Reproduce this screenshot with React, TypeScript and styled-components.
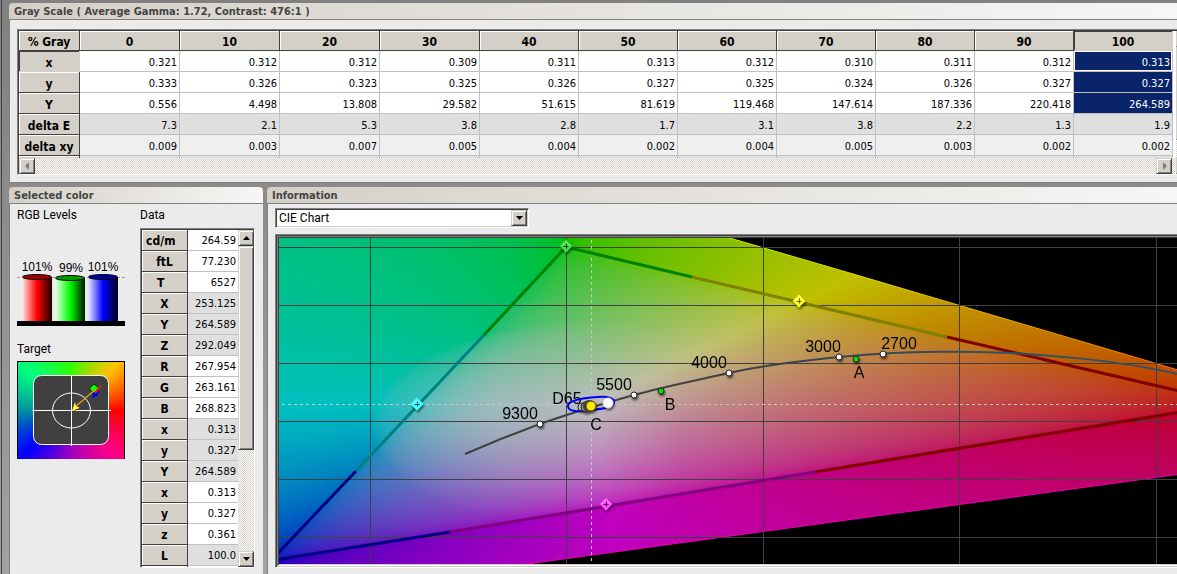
import React, { useEffect, useRef } from 'react';
import styled, { createGlobalStyle, css } from 'styled-components';

const GlobalStyle = createGlobalStyle`
  * { box-sizing: border-box; }
  body {
    margin: 0;
    overflow: hidden;
    background: #8c8c8c;
    color: #000;
    font: 11px/14px "DejaVu Sans Condensed", "DejaVu Sans", sans-serif;
  }
`;

const Desktop = styled.main`
  display: flex;
  flex-direction: column;
  gap: 4px;
  width: calc(100% + 24px);
  min-height: 100vh;
  padding: 3px 0 0 9px;
  background:
    linear-gradient(90deg, transparent 1px, #404040 1px, #404040 2px, transparent 2px),
    linear-gradient(#808080, #a2a2a2);
`;

const Columns = styled.div`
  display: flex;
  flex: 1;
  gap: 4px;
`;

const Panel = styled.section<{ $width?: number }>`
  display: flex;
  flex-direction: column;
  min-width: 0;
  flex: ${(p) => (p.$width ? `0 0 ${p.$width}px` : '1 0 auto')};
`;

const TopPanel = styled(Panel)`
  flex: none;
`;

const WidePanel = styled(Panel)`
  flex: 1 1 0;
`;

const PanelTitle = styled.h2`
  margin: 0;
  height: 17px;
  padding: 1px 5px;
  border-bottom: 1px solid #808080;
  border-radius: 4px 4px 0 0;
  background: linear-gradient(90deg, #d4d0c8, #f8f7f6);
  color: #444;
  font: bold 11px/15px "DejaVu Sans Condensed", "DejaVu Sans", sans-serif;
  white-space: nowrap;
`;

const PanelBody = styled.div<{ $top: number }>`
  flex: 1;
  padding: ${(p) => p.$top}px 8px 7px 7px;
  border: solid #808080;
  border-width: 0 0 1px 1px;
  background: #ebebeb;
`;

const Sunken = styled.div`
  display: flex;
  border: 1px solid;
  border-color: #808080 #fff #fff #808080;
  box-shadow: inset 1px 1px #404040;
  padding: 1px 0 0 1px;
`;

const GridMain = styled.div`
  flex: 1;
  min-width: 0;
`;

const Clip = styled.div<{ $height: number }>`
  height: ${(p) => p.$height}px;
  overflow: hidden;
  background: #fff;
`;

const Table = styled.table<{ $inset: number }>`
  border-collapse: separate;
  border-spacing: 0;
  table-layout: fixed;
  width: 0;
  th, td { padding-top: ${(p) => p.$inset}px; }
`;

const Col = styled.col<{ $w: number }>`
  width: ${(p) => p.$w}px;
`;

const HeadCell = styled.th<{ $pressed?: boolean; $top?: boolean }>`
  height: ${(p) => (p.$top ? 20 : 21)}px;
  padding: 0;
  overflow: hidden;
  border: solid #404040;
  border-width: 0 1px 1px 0;
  background: #d4d0c8;
  box-shadow: inset 1px 1px #fff;
  font-size: 12px;
  font-weight: bold;
  text-align: center;
  white-space: pre;
  ${(p) =>
    p.$pressed &&
    css`
      border-color: #d4d0c8;
      box-shadow: inset 1px 1px #404040;
    `}
`;

const Cell = styled.td<{ $bg?: string; $on?: boolean }>`
  height: 21px;
  padding: 0 2px 0 0;
  border: solid #c0c0c0;
  border-width: 0 1px 1px 0;
  background: ${(p) => (p.$on ? '#0a246a' : p.$bg || '#fff')};
  color: ${(p) => (p.$on ? '#fff' : '#000')};
  text-align: right;
`;

const FocusCell = styled(Cell)`
  box-shadow: inset 1px 1px #fff, inset -1px -1px #fff;
`;

const track = 'repeating-conic-gradient(#fff 0 25%, #d4d0c8 0 50%) 0 0 / 2px 2px';

const ScrollRow = styled.div`
  display: flex;
  justify-content: space-between;
  height: 16px;
  padding-right: 4px;
  background: ${track};
`;

const ScrollColumn = styled.div`
  display: flex;
  flex: 0 0 16px;
  flex-direction: column;
  background: ${track};
`;

const raised = css`
  border: 1px solid;
  border-color: #d4d0c8 #404040 #404040 #d4d0c8;
  background: #d4d0c8;
  box-shadow: inset 1px 1px #fff, inset -1px -1px #808080;
`;

const ScrollButton = styled.button`
  ${raised}
  display: flex;
  align-items: center;
  justify-content: center;
  width: 16px;
  height: 16px;
  padding: 0;
`;

const Thumb = styled.div<{ $height: number }>`
  ${raised}
  height: ${(p) => p.$height}px;
  margin-bottom: auto;
`;

const Selected = styled.div`
  display: grid;
  grid-template-columns: 108px 115px;
  column-gap: 15px;
  align-items: start;
`;

const Stack = styled.div`
  display: flex;
  flex-direction: column;
`;

const Label = styled.h3<{ $gap: number }>`
  margin: 0 0 ${(p) => p.$gap}px;
  font: 12px/14px Roboto, sans-serif;
`;

const Bars = styled.svg`
  display: block;
  margin-bottom: 16px;
  font: 12px "Liberation Sans", sans-serif;
`;

const TargetBox = styled.div`
  height: 98px;
  border: solid #000;
  border-width: 1px 1px 0 1px;
  background: conic-gradient(
    from 0deg,
    #30ff00 0deg, #ffc000 45deg, #ff0000 90deg, #ff0088 135deg,
    #a000c0 180deg, #0000ff 228deg, #0090a0 270deg, #00ff80 312deg, #30ff00 360deg
  );
`;

const Drawing = styled.svg`
  display: block;
`;

const SelectBox = styled.label`
  display: flex;
  width: 254px;
  height: 20px;
  margin-bottom: 6px;
  border: 1px solid;
  border-color: #808080 #fff #fff #808080;
  box-shadow: inset 1px 1px #404040, inset -1px -1px #d4d0c8;
  background: #fff;
  padding: 1px;
`;

const Select = styled.select`
  appearance: none;
  flex: 1;
  border: 0;
  outline: 0;
  padding: 0 2px;
  background: transparent;
  color: #000;
  font: 12px/16px Roboto, sans-serif;
`;

const DropArrow = styled.span`
  ${raised}
  display: flex;
  align-items: center;
  justify-content: center;
  width: 16px;
`;

const ChartFrame = styled.div`
  display: grid;
  overflow: hidden;
  padding: 3px;
  border: 1px solid;
  border-color: #808080 #fff #fff #808080;
  box-shadow:
    inset 1px 1px #404040, inset -1px -1px #d4d0c8,
    inset 2px 2px #808080, inset -2px -2px #fff,
    inset 3px 3px #404040, inset -3px -3px #d4d0c8;
  background: #000;
`;

const ChartView = styled.div`
  display: grid;
  min-width: 0;
  overflow: hidden;
  > * { grid-area: 1 / 1; display: block; }
`;

const ChartText = styled.g`
  font: 16px "Liberation Sans", Arial, sans-serif;
  fill: #000;
`;

type Dir = 'up' | 'down' | 'left' | 'right';
const arrows: Record<Dir, string> = {
  up: 'M0 6H7L3.5 2Z',
  down: 'M0 2H7L3.5 6Z',
  left: 'M5 0V8L1 4Z',
  right: 'M2 0V8L6 4Z',
};

const Arrow = ({ dir, color = '#000' }: { dir: Dir; color?: string }) => (
  <svg width="7" height="8" aria-hidden="true">
    <path d={arrows[dir]} fill={color} />
  </svg>
);

const levels = [0, 10, 20, 30, 40, 50, 60, 70, 80, 90, 100];
const grayRows: { name: string; bg?: string; values: string[] }[] = [
  { name: 'x', values: ['0.321', '0.312', '0.312', '0.309', '0.311', '0.313', '0.312', '0.310', '0.311', '0.312', '0.313'] },
  { name: 'y', values: ['0.333', '0.326', '0.323', '0.325', '0.326', '0.327', '0.325', '0.324', '0.326', '0.327', '0.327'] },
  { name: 'Y', values: ['0.556', '4.498', '13.808', '29.582', '51.615', '81.619', '119.468', '147.614', '187.336', '220.418', '264.589'] },
  { name: 'delta E', bg: '#dfdfdf', values: ['7.3', '2.1', '5.3', '3.8', '2.8', '1.7', '3.1', '3.8', '2.2', '1.3', '1.9'] },
  { name: 'delta xy', bg: '#efefef', values: ['0.009', '0.003', '0.007', '0.005', '0.004', '0.002', '0.004', '0.005', '0.003', '0.002', '0.002'] },
];

const GrayTable = () => (
  <Table $inset={3}>
    <colgroup>
      <Col $w={61} />
      {levels.map((l) => <Col key={l} $w={l < 40 ? 100 : 99} />)}
    </colgroup>
    <thead>
      <tr>
        <HeadCell $top scope="col">% Gray</HeadCell>
        {levels.map((l) => (
          <HeadCell key={l} $top $pressed={l === 100} scope="col">{l}</HeadCell>
        ))}
      </tr>
    </thead>
    <tbody>
      {grayRows.map((row, r) => (
        <tr key={row.name}>
          <HeadCell $pressed={r === 0} scope="row">{row.name}</HeadCell>
          {row.values.map((v, c) => {
            const on = c === 10 && r < 3;
            const Part = on && r === 0 ? FocusCell : Cell;
            return <Part key={c} $bg={row.bg} $on={on}>{v}</Part>;
          })}
        </tr>
      ))}
      <tr>
        <HeadCell />
        {levels.map((l) => <Cell key={l} $bg="#dfdfdf" />)}
      </tr>
    </tbody>
  </Table>
);

const data: [string, string, boolean?][] = [
  ['cd/m  ', '264.59'], ['ftL', '77.230'], ['T  ', '6527'],
  ['X', '253.125', true], ['Y', '264.589', true], ['Z', '292.049', true],
  ['R', '267.954'], ['G', '263.161'], ['B', '268.823'],
  ['x', '0.313', true], ['y', '0.327', true], ['Y', '264.589', true],
  ['x', '0.313'], ['y', '0.327'], ['z', '0.361'], ['L', '100.0', true],
];

const DataTable = () => (
  <Table $inset={2}>
    <colgroup>
      <Col $w={46} />
      <Col $w={51} />
    </colgroup>
    <tbody>
      {data.map(([name, value, shaded], i) => (
        <tr key={i}>
          <HeadCell scope="row">{name}</HeadCell>
          <Cell $bg={shaded ? '#dfdfdf' : undefined}>{value}</Cell>
        </tr>
      ))}
      <tr>
        <HeadCell />
        <Cell />
      </tr>
    </tbody>
  </Table>
);

const cylinders = [
  { id: 'r', x: 5, top: 39, cap: '#a00000', mid: '#ff0000', light: '#ffeaea', end: '#180000', text: '101%', tx: 20 },
  { id: 'g', x: 38, top: 40, cap: '#00a000', mid: '#00ff00', light: '#eaffea', end: '#001800', text: '99%', tx: 54 },
  { id: 'b', x: 71, top: 39, cap: '#0000a0', mid: '#0000ff', light: '#eaeaff', end: '#000018', text: '101%', tx: 86 },
];

const RgbBars = () => (
  <Bars width="108" height="88" role="img" aria-label="RGB levels">
    <defs>
      {cylinders.map((c) => (
        <linearGradient id={`cyl-${c.id}`} key={c.id}>
          <stop offset="0" stopColor={c.light} />
          <stop offset="0.5" stopColor={c.mid} />
          <stop offset="1" stopColor={c.end} />
        </linearGradient>
      ))}
    </defs>
    <path d="M0 39.5H108" stroke="#999" strokeDasharray="3 2" />
    {cylinders.map((c) => (
      <g key={c.id}>
        <rect x={c.x} y={c.top} width="30" height="45" fill={`url(#cyl-${c.id})`} />
        <ellipse cx={c.x + 15} cy={c.top} rx="14.5" ry="2.5" fill={c.cap} stroke="#000" />
        <text x={c.tx} y={c.top - 6} textAnchor="middle">{c.text}</text>
      </g>
    ))}
    <rect y="83" width="108" height="5" />
  </Bars>
);

const Target = () => (
  <TargetBox>
    <Drawing width="106" height="97" role="img" aria-label="Target">
      <rect x="15.5" y="13.5" width="75" height="69" rx="8" fill="#404040" stroke="#fff" />
      <path d="M53.5 14V84M14 48.5H93" stroke="#fff" />
      <ellipse cx="53.5" cy="48.5" rx="19" ry="17.5" fill="none" stroke="#fff" />
      <path d="M74 34L76 26L82 29L79 34L75 36Z" fill="#0000ff" />
      <path d="M71 27L76 22L81 26L76 31Z" fill="#00ff00" stroke="#003000" />
      <path d="M77 31L83 24" stroke="#e02000" strokeWidth="2" />
      <path d="M57 45L78 27" stroke="#e0a020" strokeWidth="1.5" />
      <path d="M54 49L57 40L58 44L62 46Z" fill="#ffff40" />
      <path d="M54 49L62 46L60 48Z" fill="#a01000" />
    </Drawing>
  </TargetBox>
);

const CHART_W = 1180;
const CHART_H = 326;
const ORIGIN_X = 279;
const ORIGIN_Y = 238;
const toX = (x: number) => 566 + (x - 0.3) * 1963;
const toY = (y: number) => 421 - (y - 0.3) * 582;
const clamp = (v: number) => Math.max(0, Math.min(1, v));

const locus: [number, number][] = [
  [0.1, 0.9], [0.3016, 0.6923], [0.3731, 0.6245], [0.4441, 0.5547], [0.5125, 0.4866],
  [0.5752, 0.4242], [0.627, 0.3725], [0.6915, 0.3083], [0.7347, 0.2653], [0.1741, 0.005], [0.1, 0.005],
];

const Chromaticity = () => {
  const ref = useRef<HTMLCanvasElement>(null);
  useEffect(() => {
    const ctx = ref.current?.getContext('2d');
    if (!ctx) return;
    const image = ctx.createImageData(CHART_W, CHART_H);
    for (let j = 0; j < CHART_H; j++) {
      const py = j + ORIGIN_Y;
      const y = 0.3 + (421 - py) / 582;
      for (let i = 0; i < CHART_W; i++) {
        const px = i + ORIGIN_X;
        const x = 0.3 + (px - 566) / 1963;
        const X = x / y;
        const Z = (1 - x - y) / y;
        const rgb = [
          3.2406 * X - 1.5372 - 0.4986 * Z,
          -0.9689 * X + 1.8758 + 0.0415 * Z,
          0.0557 * X - 0.204 + 1.057 * Z,
        ];
        const low = Math.min(0, ...rgb);
        const high = Math.max(...rgb) - low;
        // The neutral zone reaches past the white point towards cyan.
        const reach = Math.hypot((px - 591) / 218, (py - 425) / 102);
        const lift =
          0.75 * Math.sqrt(clamp(1 - reach)) * clamp((680 - px) / 180) * clamp((530 - py) / 110);
        const p = (j * CHART_W + i) * 4;
        for (let k = 0; k < 3; k++) {
          const level = Math.pow((rgb[k] - low) / high, 1 / 2.2);
          image.data[p + k] = 192 * (level + (0.96 - level) * lift);
        }
        image.data[p + 3] = 255;
      }
    }
    ctx.putImageData(image, 0, 0);
    ctx.globalCompositeOperation = 'destination-in';
    ctx.beginPath();
    locus.forEach(([x, y]) => ctx.lineTo(toX(x) - ORIGIN_X, toY(y) - ORIGIN_Y));
    ctx.closePath();
    ctx.fill();
  }, []);
  return <canvas ref={ref} width={CHART_W} height={CHART_H} />;
};

const gamut = [
  ['M484 335L566 247L692 277', '#008000'],
  ['M692 277L947 337', '#808000'],
  ['M947 337L1233 403.5L815 472', '#800000'],
  ['M815 472L450 532', '#800080'],
  ['M450 532L271 560.5L356 471', '#000080'],
  ['M356 471L484 335', '#008080'],
];

const primaries: [number, number, string, string][] = [
  [566, 246, '#40e040', '#004000'],
  [799, 301, '#ffff20', '#606000'],
  [417, 404, '#40ffff', '#006060'],
  [606, 504, '#ff50ff', '#600060'],
];

const temps: [number, number, string, number, number][] = [
  [540, 424, '9300', 520, 419],
  [634, 395, '5500', 614, 390],
  [729, 373, '4000', 709, 368],
  [839, 357, '3000', 823, 352],
  [883, 354, '2700', 899, 349],
];

const Overlay = () => (
  <svg
    width={CHART_W}
    height={CHART_H}
    viewBox={`${ORIGIN_X} ${ORIGIN_Y} ${CHART_W} ${CHART_H}`}
    role="img"
    aria-label="CIE chromaticity chart"
  >
    <defs>
      <linearGradient id="edge" gradientUnits="userSpaceOnUse" x1="730" y1="0" x2="1177" y2="0">
        <stop offset="0" stopColor="#c0f000" />
        <stop offset="0.3" stopColor="#e8e000" />
        <stop offset="1" stopColor="#ff7000" />
      </linearGradient>
      <linearGradient id="planck" gradientUnits="userSpaceOnUse" x1="720" y1="0" x2="1000" y2="0">
        <stop offset="0" stopColor="#404040" />
        <stop offset="1" stopColor="#305068" />
      </linearGradient>
      <filter id="shade" x="-50%" y="-50%" width="220%" height="220%">
        <feDropShadow dx="1" dy="2" stdDeviation="1" floodOpacity="0.6" />
      </filter>
    </defs>
    <path
      d={`M${locus.slice(1, 9).map(([x, y]) => `${toX(x)} ${toY(y)}`).join('L')}`}
      fill="none"
      stroke="url(#edge)"
    />
    <path d={`M${toX(0.1741)} ${toY(0.005)}L${toX(0.7347)} ${toY(0.2653)}`} stroke="#e800b0" />
    <path
      d="M370.5 238V564M566.5 238V564M763.5 238V564M959.5 238V564M1156.5 238V564M1352.5 238V564M279 247.5H1459M279 305.5H1459M279 363.5H1459M279 421.5H1459M279 479.5H1459M279 537.5H1459"
      stroke="#404040"
    />
    <path d="M282 404.5H1459M591.5 240V564" stroke="#c8c8c8" strokeDasharray="3 3" />
    {gamut.map(([d, color]) => (
      <path key={d} d={d} fill="none" stroke={color} strokeWidth="3" />
    ))}
    <path
      d="M465 454C490 443 515 433 540 424S602 404 634 395S698 380 729 373S800 361 839 357S930 351 980 352S1120 360 1177 374S1300 400 1340 420"
      fill="none"
      stroke="url(#planck)"
      strokeWidth="2"
    />
    <ChartText>
      <text x="567" y="404" textAnchor="middle">D65</text>
      <text x="596" y="430" textAnchor="middle">C</text>
      <text x="670" y="410" textAnchor="middle">B</text>
      <text x="859" y="378" textAnchor="middle">A</text>
      {temps.map(([, , label, x, y]) => (
        <text key={label} x={x} y={y} textAnchor="middle">{label}</text>
      ))}
    </ChartText>
    <g filter="url(#shade)">
      {temps.map(([x, y]) => (
        <circle key={x} cx={x} cy={y} r="3" fill="#fff" stroke="#202020" />
      ))}
      <circle cx="661" cy="391" r="3" fill="#00e000" stroke="#202020" />
      <circle cx="856" cy="359" r="3" fill="#00e000" stroke="#202020" />
    </g>
    <path
      d="M568 406C568 400 582 398 598 397C610 396 615 399 614 403C613 408 600 409 592 410C578 412 568 412 568 406Z"
      fill="none"
      stroke="#0000ff"
      strokeWidth="2"
    />
    <g filter="url(#shade)">
      <circle cx="582" cy="407" r="4" fill="#c8c8c8" stroke="#202020" />
      <circle cx="586" cy="407" r="5" fill="#808080" stroke="#202020" />
      <circle cx="589" cy="406" r="6" fill="#404040" />
      <circle cx="608" cy="403" r="5" fill="#fff" stroke="#e0e0e0" />
      <circle cx="591" cy="406" r="5" fill="#ffe800" stroke="#404000" />
    </g>
    <g filter="url(#shade)">
      {primaries.map(([x, y, fill, ink]) => (
        <g key={x}>
          <path
            d={`M${x} ${y - 5}L${x + 5} ${y}L${x} ${y + 5}L${x - 5} ${y}Z`}
            fill={fill}
            stroke={fill}
            strokeWidth="2"
          />
          <path d={`M${x - 4} ${y}L${x} ${y - 4}L${x + 4} ${y}`} fill="none" stroke="#fff" opacity="0.5" />
          <path d={`M${x - 2.5} ${y + 0.5}h5M${x + 0.5} ${y - 2.5}v5`} stroke={ink} />
        </g>
      ))}
    </g>
  </svg>
);

export default function App() {
  return (
    <>
      <GlobalStyle />
      <Desktop>
        <TopPanel>
          <PanelTitle>Gray Scale ( Average Gamma: 1.72, Contrast: 476:1 )</PanelTitle>
          <PanelBody $top={9}>
            <Sunken>
              <GridMain>
                <Clip $height={127}>
                  <GrayTable />
                </Clip>
                <ScrollRow>
                  <ScrollButton aria-label="Scroll left"><Arrow dir="left" color="#808080" /></ScrollButton>
                  <ScrollButton aria-label="Scroll right"><Arrow dir="right" color="#808080" /></ScrollButton>
                </ScrollRow>
              </GridMain>
              <ScrollColumn>
                <ScrollButton aria-label="Scroll up"><Arrow dir="up" /></ScrollButton>
                <Thumb $height={93} />
                <ScrollButton aria-label="Scroll down"><Arrow dir="down" /></ScrollButton>
              </ScrollColumn>
            </Sunken>
          </PanelBody>
        </TopPanel>
        <Columns>
          <Panel $width={254}>
            <PanelTitle>Selected color</PanelTitle>
            <PanelBody $top={4}>
              <Selected>
                <Stack>
                  <Label $gap={16}>RGB Levels</Label>
                  <RgbBars />
                  <Label $gap={5}>Target</Label>
                  <Target />
                </Stack>
                <Stack>
                  <Label $gap={6}>Data</Label>
                  <Sunken>
                    <GridMain>
                      <Clip $height={337}>
                        <DataTable />
                      </Clip>
                    </GridMain>
                    <ScrollColumn>
                      <ScrollButton aria-label="Scroll up"><Arrow dir="up" /></ScrollButton>
                      <Thumb $height={204} />
                      <ScrollButton aria-label="Scroll down"><Arrow dir="down" /></ScrollButton>
                    </ScrollColumn>
                  </Sunken>
                </Stack>
              </Selected>
            </PanelBody>
          </Panel>
          <WidePanel>
            <PanelTitle>Information</PanelTitle>
            <PanelBody $top={4}>
              <SelectBox>
                <Select aria-label="Chart type" defaultValue="CIE Chart">
                  <option>CIE Chart</option>
                </Select>
                <DropArrow><Arrow dir="down" /></DropArrow>
              </SelectBox>
              <ChartFrame>
                <ChartView>
                  <Chromaticity />
                  <Overlay />
                </ChartView>
              </ChartFrame>
            </PanelBody>
          </WidePanel>
        </Columns>
      </Desktop>
    </>
  );
}
